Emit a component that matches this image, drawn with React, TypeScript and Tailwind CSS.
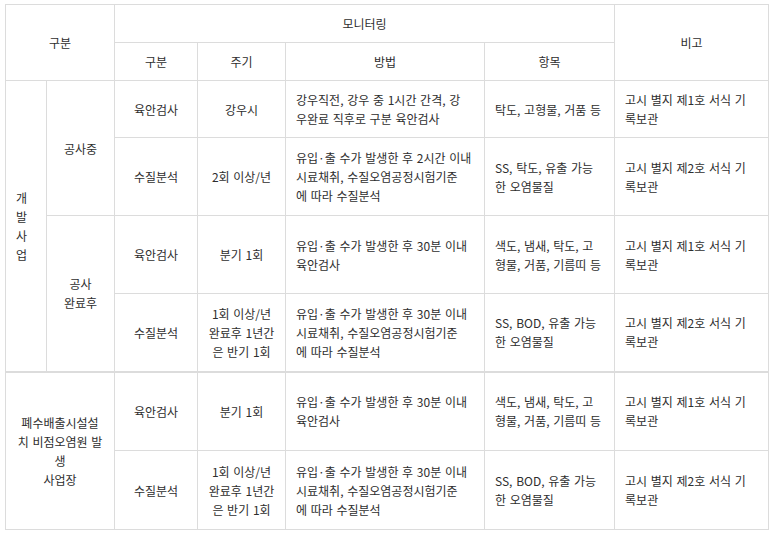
const td = "border border-[#dcdcdc] px-[10px] py-[9px] align-middle whitespace-nowrap";

const Lines = ({ lines }: { lines: string[] }) => (
  <>
    {lines.map((l, i) => (
      <span key={i}>
        {i > 0 && <br />}
        {l}
      </span>
    ))}
  </>
);

type Row = {
  kind: string;
  cycle: string[];
  method: string[];
  items: string[];
  note: string[];
};

const WATER_30 = ["유입·출 수가 발생한 후 30분 이내", "시료채취, 수질오염공정시험기준", "에 따라 수질분석"];
const NOTE1 = ["고시 별지 제1호 서식 기", "록보관"];
const NOTE2 = ["고시 별지 제2호 서식 기", "록보관"];

const ROWS: Row[] = [
  {
    kind: "육안검사",
    cycle: ["강우시"],
    method: ["강우직전, 강우 중 1시간 간격, 강", "우완료 직후로 구분 육안검사"],
    items: ["탁도, 고형물, 거품 등"],
    note: NOTE1,
  },
  {
    kind: "수질분석",
    cycle: ["2회 이상/년"],
    method: ["유입·출 수가 발생한 후 2시간 이내", "시료채취, 수질오염공정시험기준", "에 따라 수질분석"],
    items: ["SS, 탁도, 유출 가능", "한 오염물질"],
    note: NOTE2,
  },
  {
    kind: "육안검사",
    cycle: ["분기 1회"],
    method: ["유입·출 수가 발생한 후 30분 이내", "육안검사"],
    items: ["색도, 냄새, 탁도, 고", "형물, 거품, 기름띠 등"],
    note: NOTE1,
  },
  {
    kind: "수질분석",
    cycle: ["1회 이상/년", "완료후 1년간", "은 반기 1회"],
    method: WATER_30,
    items: ["SS, BOD, 유출 가능", "한 오염물질"],
    note: NOTE2,
  },
  {
    kind: "육안검사",
    cycle: ["분기 1회"],
    method: ["유입·출 수가 발생한 후 30분 이내", "육안검사"],
    items: ["색도, 냄새, 탁도, 고", "형물, 거품, 기름띠 등"],
    note: NOTE1,
  },
  {
    kind: "수질분석",
    cycle: ["1회 이상/년", "완료후 1년간", "은 반기 1회"],
    method: WATER_30,
    items: ["SS, BOD, 유출 가능", "한 오염물질"],
    note: NOTE2,
  },
];

const HEIGHTS = ["h-[57px]", "h-[78px]", "h-[78px]", "h-[78px]", "h-[79px]", "h-[79px]"];

const Cells = ({ row }: { row: Row }) => (
  <>
    <td className={`${td} text-center`}>{row.kind}</td>
    <td className={`${td} text-center`}>
      <Lines lines={row.cycle} />
    </td>
    <td className={`${td} text-left`}>
      <Lines lines={row.method} />
    </td>
    <td className={`${td} text-left`}>
      <Lines lines={row.items} />
    </td>
    <td className={`${td} text-left`}>
      <Lines lines={row.note} />
    </td>
  </>
);

export default function App() {
  return (
    <div className="w-[773px] h-[535px] bg-white pt-[4px] pl-[5px] font-['Noto_Sans_CJK_KR',sans-serif] text-[12px] leading-[19px] text-[#2e2e2e] [word-spacing:1px]">
      <table className="table-fixed border-collapse w-[763px]">
        <colgroup>
          <col className="w-[41px]" />
          <col className="w-[68px]" />
          <col className="w-[83px]" />
          <col className="w-[88px]" />
          <col className="w-[199px]" />
          <col className="w-[130px]" />
          <col className="w-[154px]" />
        </colgroup>
        <thead>
          <tr className="h-[38px]">
            <th rowSpan={2} colSpan={2} className={`${td} font-normal text-center`}>
              구분
            </th>
            <th colSpan={4} className={`${td} font-normal text-center`}>
              모니터링
            </th>
            <th rowSpan={2} className={`${td} font-normal text-center`}>
              비고
            </th>
          </tr>
          <tr className="h-[37px]">
            <th className={`${td} font-normal text-center`}>구분</th>
            <th className={`${td} font-normal text-center`}>주기</th>
            <th className={`${td} font-normal text-center`}>방법</th>
            <th className={`${td} font-normal text-center`}>항목</th>
          </tr>
        </thead>
        <tbody>
          <tr className={HEIGHTS[0]}>
            <td rowSpan={4} className={`${td} text-left whitespace-normal`}>
              <Lines lines={["개", "발", "사", "업"]} />
            </td>
            <td rowSpan={2} className={`${td} text-center`}>
              공사중
            </td>
            <Cells row={ROWS[0]} />
          </tr>
          <tr className={HEIGHTS[1]}>
            <Cells row={ROWS[1]} />
          </tr>
          <tr className={HEIGHTS[2]}>
            <td rowSpan={2} className={`${td} text-center`}>
              <Lines lines={["공사", "완료후"]} />
            </td>
            <Cells row={ROWS[2]} />
          </tr>
          <tr className={`${HEIGHTS[3]} border-b-2 border-b-[#dcdcdc]`}>
            <Cells row={ROWS[3]} />
          </tr>
          <tr className={HEIGHTS[4]}>
            <td rowSpan={2} colSpan={2} className={`${td} text-center`}>
              <Lines lines={["폐수배출시설설", "치 비점오염원 발", "생", "사업장"]} />
            </td>
            <Cells row={ROWS[4]} />
          </tr>
          <tr className={HEIGHTS[5]}>
            <Cells row={ROWS[5]} />
          </tr>
        </tbody>
      </table>
    </div>
  );
}
